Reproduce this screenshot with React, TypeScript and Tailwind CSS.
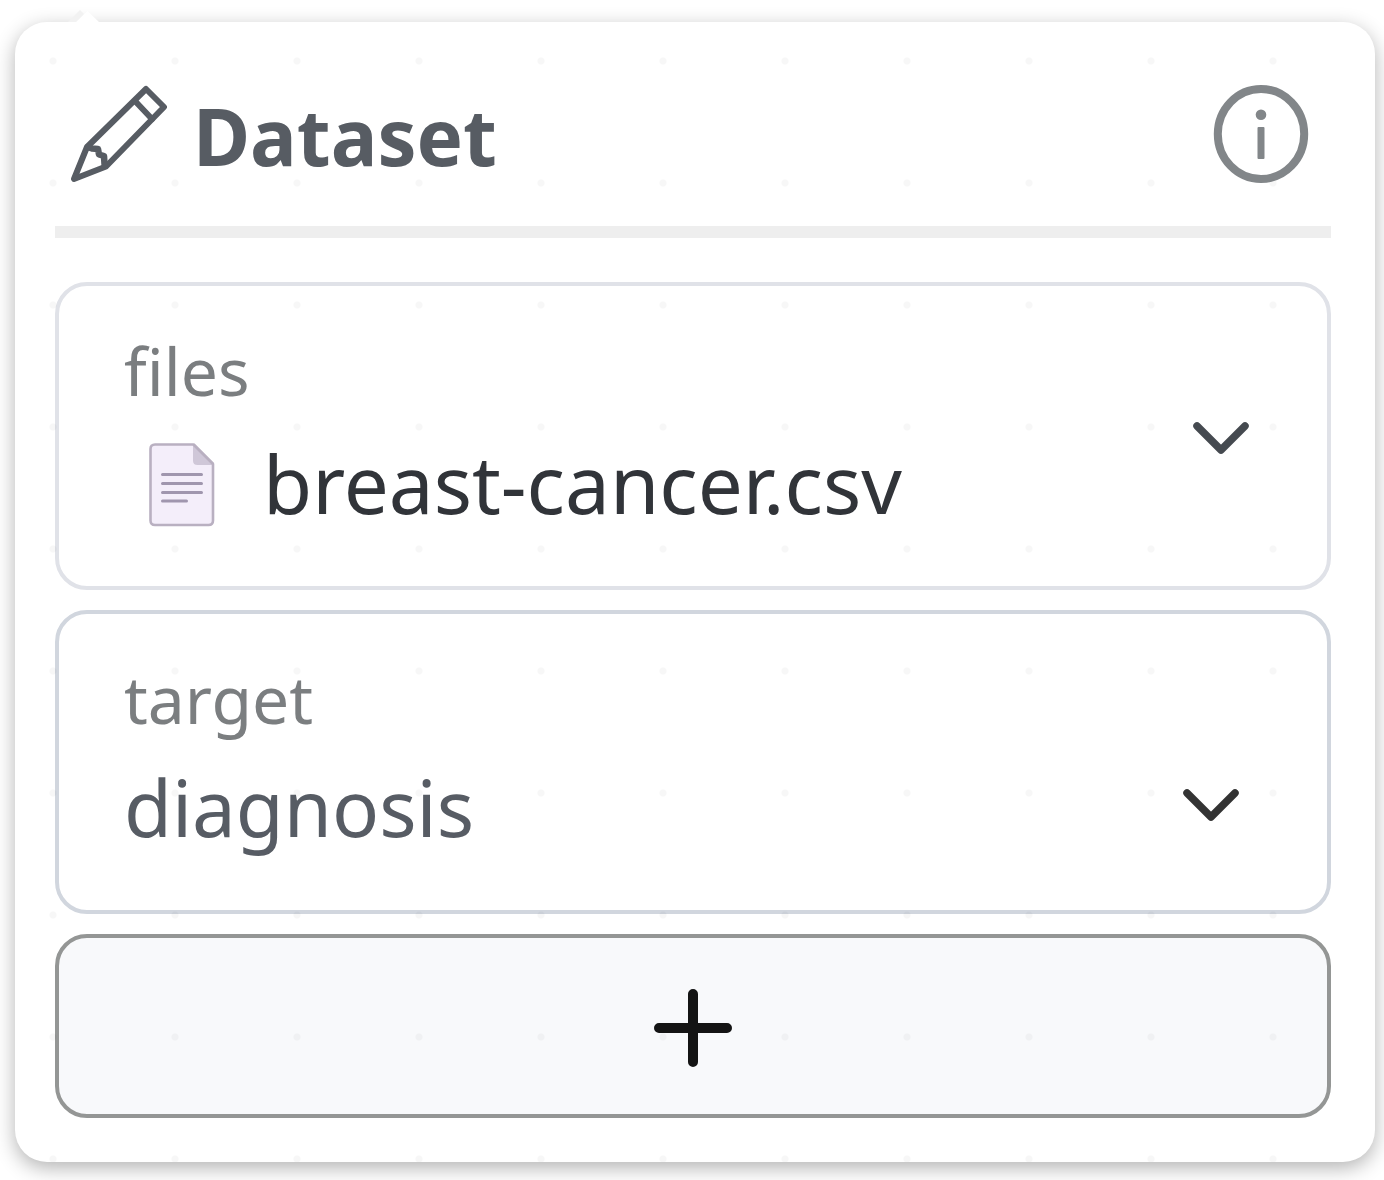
import { useId, useState } from "react";

function PencilIcon() {
  return (
    <svg width="96" height="98" viewBox="0 0 96 98" fill="none" stroke="currentColor" strokeWidth="6" strokeLinejoin="round" strokeLinecap="round" aria-hidden="true">
      <path d="M75 4 L93 22 L35 81.500 L3 94 L16 62 Z" />
      <path d="M64 16 L81 34" />
      <path d="M17 62 L21 63.500 L27 64 L28 69.500 L33 71 L33.500 79" strokeWidth="6.500" />
    </svg>
  );
}

function InfoIcon() {
  return (
    <svg width="96" height="98" viewBox="0 0 96 98" fill="none" aria-hidden="true">
      <ellipse cx="48" cy="49" rx="43.200" ry="45" stroke="currentColor" strokeWidth="8" />
      <circle cx="48" cy="29.700" r="5.300" fill="currentColor" />
      <rect x="44.500" y="42" width="7" height="32" rx="1" fill="currentColor" />
    </svg>
  );
}

function FileIcon() {
  return (
    <svg className="shrink-0" width="66" height="84" viewBox="0 0 66 84" aria-hidden="true">
      <path d="M6 1.500 H44.500 L64 21 V77.500 Q64 82 59.500 82 H6 Q1.500 82 1.500 77.500 V6 Q1.500 1.500 6 1.500 Z" fill="#f4eefa" stroke="#b9b0c1" strokeWidth="2.600" strokeLinejoin="round" />
      <path d="M44 2 L63.500 22 H48.500 Q44 22 44 17.500 Z" fill="#cfc7d8" />
      <path d="M44.500 1.500 L64 21" stroke="#b9b0c1" strokeWidth="2.600" />
      <path d="M13.500 31.500 H52.500 M13.500 40.500 H52.500 M13.500 49.500 H52.500 M13.500 58 H37.500" stroke="#a096ae" strokeWidth="3" strokeLinecap="round" />
    </svg>
  );
}

function Chevron({ color }: { color: string }) {
  return (
    <svg className="pointer-events-none shrink-0" width="56" height="34" viewBox="0 0 56 34" fill="none" aria-hidden="true">
      <path d="M4 5 L28 29 L52 5" stroke={color} strokeWidth="7.500" strokeLinecap="round" strokeLinejoin="round" />
    </svg>
  );
}

function PlusIcon() {
  return (
    <svg width="78" height="78" viewBox="0 0 78 78" fill="none" aria-hidden="true">
      <path d="M39 5 V73 M5 39 H73" stroke="#141414" strokeWidth="10" strokeLinecap="round" />
    </svg>
  );
}

export default function App() {
  const filesId = useId();
  const targetId = useId();
  const [file, setFile] = useState("breast-cancer.csv");
  const [target, setTarget] = useState("diagnosis");

  return (
    <main className="bg-white pt-[22px] pr-[9px] pb-[18px] pl-[15px] font-['Noto_Sans',sans-serif]">
      <section className="relative rounded-[32px] bg-white pr-11 pb-11 pl-10 shadow-[0_6px_20px_rgba(0,0,0,0.3)]">
        <svg className="absolute -top-3 left-[53px]" width="32" height="13" viewBox="0 0 32 13" aria-hidden="true">
          <path d="M0 12 L12 0 L16 4 L9 12 Z" fill="#f2f2f2" />
          <path d="M7 13 L19.500 1 L32 13 Z" fill="#ffffff" />
        </svg>

        <header className="flex items-center border-b-12 border-[#eeeeee] pt-[62px] pr-[22px] pb-[42px] pl-4">
          <button type="button" aria-label="Edit dataset" className="text-[#575c63]">
            <PencilIcon />
          </button>
          <h1 className="ml-[26px] flex-1 pt-1 text-[78px] leading-24 font-bold text-[#575c63]">Dataset</h1>
          <button type="button" aria-label="About this dataset" className="text-[#828689]">
            <InfoIcon />
          </button>
        </header>

        <div className="mt-11 flex flex-col gap-5">
          <div className="flex items-center rounded-[32px] border-4 border-[#e0e2e8] pr-[78px] pl-[65px]">
            <div className="min-w-0 flex-1 pt-[33px] pb-[45px]">
              <label htmlFor={filesId} className="block text-[66px] leading-[102px] text-[#7b7e80] [font-variant-ligatures:none]">
                files
              </label>
              <div className="mt-1 flex items-center pl-[25px]">
                <div className="shrink-0 pt-1">
                  <FileIcon />
                </div>
                <select
                  id={filesId}
                  value={file}
                  onChange={(e) => setFile(e.target.value)}
                  className="ml-12 min-w-0 flex-1 appearance-none bg-transparent text-[80px] leading-[116px] text-[#313439]"
                >
                  <option>breast-cancer.csv</option>
                </select>
              </div>
            </div>
            <div className="pt-1">
              <Chevron color="#454a50" />
            </div>
          </div>

          <div className="rounded-[32px] border-4 border-[#d1d6de] pt-[33px] pr-[88px] pb-[45px] pl-[65px]">
            <label htmlFor={targetId} className="block text-[66px] leading-[102px] text-[#7b7e80]">
              target
            </label>
            <div className="flex items-center">
              <select
                id={targetId}
                value={target}
                onChange={(e) => setTarget(e.target.value)}
                className="min-w-0 flex-1 appearance-none bg-transparent text-[78px] leading-[116px] text-[#575c64]"
              >
                <option>diagnosis</option>
              </select>
              <div className="pb-1">
                <Chevron color="#333333" />
              </div>
            </div>
          </div>

          <button type="button" aria-label="Add field" className="flex items-center justify-center rounded-[32px] border-4 border-[#949695] bg-[#f8f9fb] pt-[51px] pb-[47px]">
            <PlusIcon />
          </button>
        </div>

        <div className="pointer-events-none absolute inset-0 rounded-[32px] bg-[radial-gradient(circle,rgba(0,0,0,0.03)_3px,transparent_4px)] bg-[size:122px_122px] bg-[position:-23px_-22px]" />
      </section>
    </main>
  );
}
